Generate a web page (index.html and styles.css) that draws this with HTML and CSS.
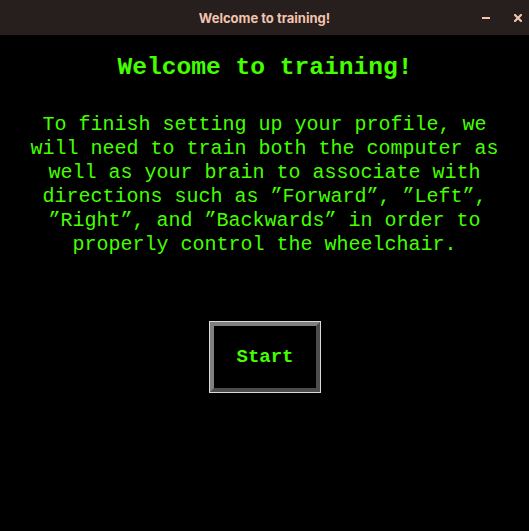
FILE: index.html
```html
<!DOCTYPE html>
<html>
<head>
<meta charset="utf-8">
<link rel="stylesheet" href="styles.css">
</head>
<body>
<div class="window">
  <header class="titlebar">
    <span class="title">Welcome to training!</span>
    <div class="controls">
      <span class="ctl min"></span>
      <svg class="ctl close" width="8" height="8" viewBox="0 0 8 8"><path d="M1 1L7 7M7 1L1 7" stroke="#f2c3ad" stroke-width="2.2" stroke-linecap="square"/></svg>
    </div>
  </header>
  <main class="content">
    <h1 class="heading">Welcome to training!</h1>
    <p class="message">To finish setting up your profile, we<br>will need to train both the computer as<br>well as your brain to associate with<br>directions such as ”Forward”, ”Left”,<br>”Right”, and ”Backwards” in order to<br>properly control the wheelchair.</p>
    <button class="start">Start</button>
  </main>
</div>
</body>
</html>
```
FILE: styles.css
```css
html, body {
  margin: 0;
  padding: 0;
  background: #000;
}
.window {
  width: 529px;
  height: 531px;
  display: flex;
  flex-direction: column;
  background: #000;
}
.titlebar {
  height: 35px;
  flex: none;
  background: #261f1e;
  display: flex;
  align-items: center;
  justify-content: center;
  position: relative;
}
.title {
  font-family: "Inter", "Liberation Sans", sans-serif;
  font-weight: 700;
  font-size: 13px;
  color: #f2c3ad;
}
.controls {
  position: absolute;
  right: 7px;
  top: 0;
  height: 35px;
  display: flex;
  align-items: center;
  gap: 24px;
}
.min {
  display: block;
  width: 8px;
  height: 2px;
  background: #f2c3ad;
  margin-top: 1px;
}
.close {
  display: block;
}
.content {
  flex: 1;
  display: flex;
  flex-direction: column;
  align-items: center;
  color: #44ff00;
  font-family: "Liberation Mono", "DejaVu Sans Mono", monospace;
}
.heading {
  margin: 19px 0 0 0;
  font-size: 24.6px;
  line-height: 28px;
  font-weight: 700;
  text-align: center;
  padding-left: 1px;
}
.message {
  margin: 31px 0 0 0;
  font-size: 20px;
  line-height: 24px;
  text-align: center;
  font-weight: 400;
}
.start {
  margin-top: 65px;
  width: 110px;
  height: 70px;
  box-sizing: border-box;
  background: #000;
  color: #44ff00;
  font-family: "Liberation Mono", "DejaVu Sans Mono", monospace;
  font-weight: 700;
  font-size: 19px;
  border: 4px solid;
  border-color: #808080 #4c4c4c #4c4c4c #808080;
  outline: 1px solid #d9d9d9;
  outline-offset: 0;
  padding: 0;
  margin-left: 1px;
}
```
